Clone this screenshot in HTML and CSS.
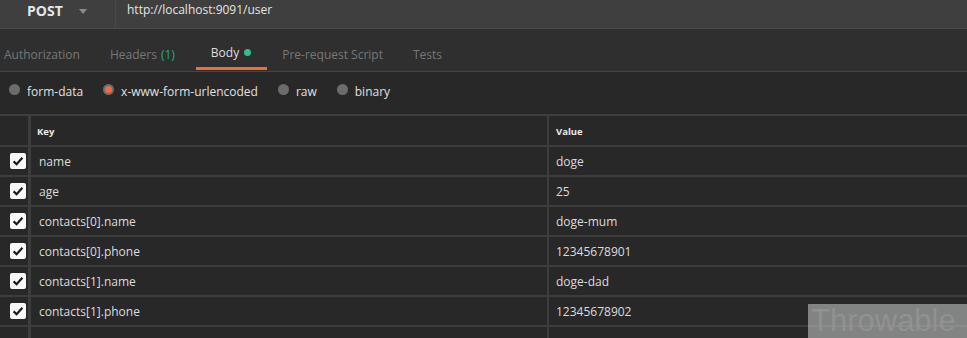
FILE: index.html
```html
<!DOCTYPE html>
<html>
<head>
<meta charset="utf-8">
<link rel="stylesheet" href="styles.css">
</head>
<body>
<div class="app">
  <div class="urlbar">
    <div class="method">POST <span class="caret"></span></div>
    <div class="url">http://localhost:9091/user</div>
  </div>
  <div class="tabs">
    <div class="tab t-auth">Authorization</div>
    <div class="tab t-head">Headers <span class="green">(1)</span></div>
    <div class="tab t-body active">Body <span class="dot"></span></div>
    <div class="tab t-pre">Pre-request Script</div>
    <div class="tab t-tests">Tests</div>
  </div>
  <div class="radios">
    <div class="radio r1"><span class="circ"></span>form-data</div>
    <div class="radio r2"><span class="circ sel"></span>x-www-form-urlencoded</div>
    <div class="radio r3"><span class="circ"></span>raw</div>
    <div class="radio r4"><span class="circ"></span>binary</div>
  </div>
  <div class="table">
    <div class="row head">
      <div class="c-check"></div>
      <div class="c-key">Key</div>
      <div class="c-val">Value</div>
    </div>
    <div class="row"><div class="c-check"><span class="cb"><svg viewBox="0 0 16 16"><path d="M3.6 8.4 L6.6 11.2 L12.4 4.8" fill="none" stroke="#1a1a1a" stroke-width="2.2"/></svg></span></div><div class="c-key">name</div><div class="c-val">doge</div></div>
    <div class="row"><div class="c-check"><span class="cb"><svg viewBox="0 0 16 16"><path d="M3.6 8.4 L6.6 11.2 L12.4 4.8" fill="none" stroke="#1a1a1a" stroke-width="2.2"/></svg></span></div><div class="c-key">age</div><div class="c-val">25</div></div>
    <div class="row"><div class="c-check"><span class="cb"><svg viewBox="0 0 16 16"><path d="M3.6 8.4 L6.6 11.2 L12.4 4.8" fill="none" stroke="#1a1a1a" stroke-width="2.2"/></svg></span></div><div class="c-key">contacts[0].name</div><div class="c-val">doge-mum</div></div>
    <div class="row"><div class="c-check"><span class="cb"><svg viewBox="0 0 16 16"><path d="M3.6 8.4 L6.6 11.2 L12.4 4.8" fill="none" stroke="#1a1a1a" stroke-width="2.2"/></svg></span></div><div class="c-key">contacts[0].phone</div><div class="c-val">12345678901</div></div>
    <div class="row"><div class="c-check"><span class="cb"><svg viewBox="0 0 16 16"><path d="M3.6 8.4 L6.6 11.2 L12.4 4.8" fill="none" stroke="#1a1a1a" stroke-width="2.2"/></svg></span></div><div class="c-key">contacts[1].name</div><div class="c-val">doge-dad</div></div>
    <div class="row"><div class="c-check"><span class="cb"><svg viewBox="0 0 16 16"><path d="M3.6 8.4 L6.6 11.2 L12.4 4.8" fill="none" stroke="#1a1a1a" stroke-width="2.2"/></svg></span></div><div class="c-key">contacts[1].phone</div><div class="c-val">12345678902</div></div>
    <div class="row"><div class="c-check"></div><div class="c-key"></div><div class="c-val"></div></div>
  </div>
  <div class="watermark">Throwable</div>
</div>
</body>
</html>
```
FILE: styles.css
```css
* { box-sizing: border-box; }
html, body { margin: 0; padding: 0; }
body {
  width: 967px;
  height: 338px;
  overflow: hidden;
  background: #282828;
  font-family: "Open Sans", "Noto Sans", sans-serif;
  font-size: 12px;
  color: #dcdcdc;
}
.app { position: relative; width: 967px; height: 338px; overflow: hidden; }
.urlbar {
  display: flex;
  height: 29px;
  background: #3f3f3f;
  border-bottom: 1px solid #494949;
}
.method {
  width: 116px;
  border-right: 1px solid #4a4a4a;
  padding-left: 27px;
  padding-bottom: 7px;
  font-weight: 700;
  font-size: 14px;
  color: #e6e6e6;
  display: flex;
  align-items: center;
  height: 28px;
}
.caret {
  display: inline-block;
  margin-left: 16px;
  margin-top: 1px;
  width: 0; height: 0;
  border-left: 4px solid transparent;
  border-right: 4px solid transparent;
  border-top: 5px solid #8a8a8a;
}
.url {
  padding-left: 11px;
  padding-bottom: 9px;
  height: 28px;
  display: flex;
  align-items: center;
  font-size: 12px;
  color: #e4e4e4;
}
.tabs {
  position: relative;
  display: flex;
  height: 43px;
  background: #2f2f2f;
  border-bottom: 1px solid #454545;
  font-size: 12px;
}
.tab {
  color: #777;
  height: 42px;
  display: flex;
  align-items: center;
  padding-top: 8px;
}
.t-auth { margin-left: 4px; }
.t-head { margin-left: 30px; }
.t-head .green { color: #2fa77a; margin-left: 4px; }
.t-body {
  margin-left: 21px;
  padding: 8px 16px 0 15px;
  color: #dedede;
  border-bottom: 3px solid #f26b3a;
  height: 41px;
  align-self: flex-start;
}
.dot {
  display: inline-block;
  width: 7px; height: 7px;
  border-radius: 50%;
  background: #2fbf8a;
  margin-left: 5px;
}
.t-pre { margin-left: 15px; }
.t-tests { margin-left: 30px; }
.radios {
  display: flex;
  align-items: center;
  height: 44px;
  border-bottom: 2px solid #3d3d3d;
  padding-bottom: 4px;
  font-size: 12px;
}
.radio { display: flex; align-items: center; color: #e0e0e0; }
.circ {
  width: 11px; height: 11px;
  border-radius: 50%;
  background: #6c6c6c;
  margin-right: 7px;
  margin-top: -3px;
  position: relative;
}
.circ.sel::after {
  content: "";
  position: absolute;
  left: 2px; top: 2px;
  width: 7px; height: 7px;
  border-radius: 50%;
  background: #f26b3a;
}
.r1 { margin-left: 9px; }
.r2 { margin-left: 20px; }
.r3 { margin-left: 20px; }
.r4 { margin-left: 20px; }
.table { display: flex; flex-direction: column; }
.row {
  display: flex;
  height: 30px;
  border-bottom: 2px solid #3d3d3d;
}
.row.head { height: 31px; }
.c-check {
  width: 31px;
  border-right: 3px solid #3d3d3d;
  display: flex;
  align-items: center;
  justify-content: flex-end;
  padding-right: 2px;
}
.c-key {
  width: 518px;
  border-right: 2px solid #3d3d3d;
  padding-left: 8px;
  display: flex;
  align-items: center;
  padding-top: 1px;
}
.c-val {
  flex: 1;
  padding-left: 7px;
  display: flex;
  align-items: center;
  padding-top: 1px;
}
.head .c-key, .head .c-val {
  font-weight: 700;
  font-size: 9.5px;
  color: #e8e8e8;
}
.head .c-key { padding-left: 6px; }
.cb {
  width: 16px; height: 16px;
  background: #fafafa;
  border-radius: 2px;
  display: flex;
}
.cb svg { width: 16px; height: 16px; }
.watermark {
  position: absolute;
  left: 808px;
  top: 304px;
  width: 159px;
  height: 34px;
  background: rgba(185, 187, 188, 0.62);
  color: rgba(150, 150, 150, 0.75);
  font-family: "Liberation Sans", Arial, sans-serif;
  font-size: 31px;
  line-height: 34px;
  padding-left: 3px;
  white-space: nowrap;
}
```
